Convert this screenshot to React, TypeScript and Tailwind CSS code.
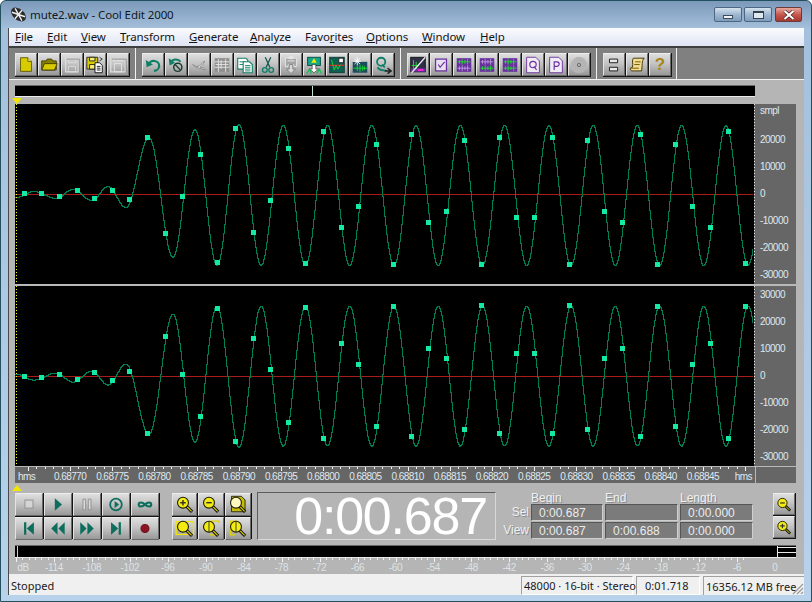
import type { ReactNode } from 'react'

const MENU = [
  { pre: '', key: 'F', post: 'ile', w: 'w-[32px]' },
  { pre: '', key: 'E', post: 'dit', w: 'w-[34px]' },
  { pre: '', key: 'V', post: 'iew', w: 'w-[39px]' },
  { pre: '', key: 'T', post: 'ransform', w: 'w-[69px]' },
  { pre: '', key: 'G', post: 'enerate', w: 'w-[61px]' },
  { pre: '', key: 'A', post: 'nalyze', w: 'w-[55px]' },
  { pre: 'Favo', key: 'r', post: 'ites', w: 'w-[61px]' },
  { pre: '', key: 'O', post: 'ptions', w: 'w-[56px]' },
  { pre: '', key: 'W', post: 'indow', w: 'w-[58px]' },
  { pre: '', key: 'H', post: 'elp', w: 'w-[40px]' },
]

const BEVEL =
  'flex items-center justify-center border-t border-l border-t-[#eeeeee] border-l-[#e4e4e4] border-r border-b border-r-[#6a6a6a] border-b-[#6a6a6a] bg-[linear-gradient(#dedede,#c4c4c4_45%,#989898)]'

// waveform, built from the extrema read off the top channel
function buildExtrema(): [number, number][] {
  const pts: [number, number][] = [
    [15, 197],
    [33, 191],
    [55, 198],
    [72, 189],
    [91, 200],
    [107, 186],
    [125, 207],
    [148, 137],
    [172, 257],
    [194, 129],
    [216, 265],
    [238, 124],
  ]
  for (let k = 0; k < 12; k++) {
    pts.push([238 + 44.27 * k + 22.135, 265])
    pts.push([238 + 44.27 * (k + 1), 125])
  }
  return pts
}

const EXTREMA = buildExtrema()

function waveAt(x: number) {
  for (let i = 0; i < EXTREMA.length - 1; i++) {
    const [x0, y0] = EXTREMA[i]
    const [x1, y1] = EXTREMA[i + 1]
    if (x >= x0 && x <= x1) {
      const t = (x - x0) / (x1 - x0)
      return y0 + ((y1 - y0) * (1 - Math.cos(Math.PI * t))) / 2
    }
  }
  return 194
}

function Channel({ mirrored }: { mirrored?: boolean }) {
  const center = 90
  const toLocal = (y: number) => (mirrored ? center - (y - 104 - center) + 0.6 : y - 104)
  // one pixel column at a time, so the line steps like the original draw
  let d = ''
  for (let x = 15; x <= 754; x++) {
    const y = Math.round(toLocal(waveAt(x)))
    d += d ? `V${y + 0.5}H${x - 15 + 1}` : `M${x - 15} ${y + 0.5}H${x - 15 + 1}`
  }
  const samples = Array.from({ length: 42 }, (_, i) => 24.3 + i * 17.595)
  return (
    <svg width="739" height="180" className="block bg-black">
      <rect x="0" y="90" width="739" height="1" fill="#a81c1c" />
      <path d={d} fill="none" stroke="#007d52" strokeWidth="1" shapeRendering="crispEdges" />
      {samples.map((x) => (
        <rect
          key={x}
          x={Math.round(x - 15 - 2.5)}
          y={Math.round(toLocal(waveAt(x)) - 2.5)}
          width="5"
          height="5"
          fill="#14eaa6"
        />
      ))}
      <line x1="1.5" y1="0" x2="1.5" y2="180" stroke="#ffff00" strokeDasharray="1 2" />
    </svg>
  )
}

function VerticalRuler({ labels, first }: { labels: string[]; first: ReactNode }) {
  return (
    <div className="relative h-[180px] w-[42px] bg-[#666666] text-[10px] leading-none tracking-[-0.55px] text-[#dfe8f0]">
      {first}
      {labels.map((l) => (
        <div key={l} className="flex h-[27px] items-center pl-[6px]">
          {l}
        </div>
      ))}
      <svg width="5" height="180" className="absolute top-0 left-0">
        <line x1="0.5" y1="0" x2="0.5" y2="180" stroke="#e8e8e8" strokeDasharray="1 2" />
      </svg>
    </div>
  )
}

function TimeRuler() {
  const labels = Array.from({ length: 16 }, (_, i) => `0.68${770 + i * 5}`)
  const ticks = Array.from({ length: 90 }, (_, i) => 70 - 15 - 8.44 * 5 + i * 8.44)
  return (
    <div className="flex h-[17px]">
      <div className="h-full w-[740px] border-t border-t-[#b8b8b8] bg-[#666666]">
        <svg width="739" height="5" className="block">
          {ticks.map((x, i) => (
            <rect key={x} x={Math.round(x)} y="0" width="1" height={i % 5 === 0 ? 4 : 2} fill="#f0f0f0" />
          ))}
        </svg>
        <div className="flex text-[10px] leading-[10px] tracking-[-0.55px] text-[#dfe8f0]">
          <div className="w-[34px] pl-[3px]">hms</div>
          {labels.map((l) => (
            <div key={l} className="w-[42.2px] shrink-0 text-center">
              {l}
            </div>
          ))}
          <div className="flex-1 pr-[3px] text-right">hms</div>
        </div>
      </div>
      <div className="h-full flex-1 border-t border-l border-t-[#b8b8b8] border-l-[#b8b8b8] bg-[#666666]" />
    </div>
  )
}

function Marker({ down }: { down?: boolean }) {
  return (
    <svg width="10" height="6" className="-ml-[3px] block">
      <path d={down ? 'M0 0h10L5 6z' : 'M5 0l5 6H0z'} fill="#f2e600" />
    </svg>
  )
}

function Icon({ children }: { children: ReactNode }) {
  return (
    <svg viewBox="0 0 22 23" width="21" height="22" className="block">
      {children}
    </svg>
  )
}

const TEAL = '#0f7f68'
const PURPLE = '#6b2fa0'

function WaveBars({ y, color }: { y: number; color: string }) {
  return (
    <path
      d={`M4 ${y}h14M6 ${y - 2}v4M9 ${y - 3}v6M12 ${y - 2}v4M15 ${y - 3}v6`}
      stroke={color}
      strokeWidth="1"
      fill="none"
    />
  )
}

function Floppy({ color, edge }: { color: string; edge: string }) {
  return (
    <>
      <path d="M4 4h14v15H4z" fill={color} stroke={edge} strokeWidth="1.5" />
      <path d="M7 4h8v5H7zM7 13h8v6H7z" fill="none" stroke={edge} />
    </>
  )
}

const TOOLBAR: ReactNode[][] = [
  [
    <Icon>
      <path d="M5 3.5h8l4 4v11H5z" fill="#d8cc00" stroke="#5f5800" />
      <path d="M13 3.5v4h4" fill="#f4ee70" stroke="#5f5800" />
    </Icon>,
    <Icon>
      <path d="M3 7h5l1-2h5l1 2h4v10H3z" fill="#8a8000" stroke="#3e3a00" />
      <path d="M6 10h14l-3 7H3z" fill="#d8cc00" stroke="#3e3a00" />
    </Icon>,
    <Icon>
      <Floppy color="none" edge="#dcdcdc" />
      <path d="M5 5h14v15" fill="none" stroke="#8c8c8c" />
    </Icon>,
    <Icon>
      <path d="M2 3h12v13H2z" fill="#d8cc00" stroke="#222" />
      <path d="M5 3h6v4H5zM5 11h6v5H5z" fill="#f4ee70" stroke="#222" />
      <path d="M11 9h5l3 3v8h-8z" fill="#fff" stroke="#111" />
      <path d="M13 13h4M13 15h4M13 17h4" stroke="#111" />
      <path d="M16 3l3 2-3 2" fill="none" stroke="#333" />
    </Icon>,
    <Icon>
      <path d="M3 4h16v15H3z" fill="none" stroke="#dcdcdc" strokeWidth="1.5" />
      <path d="M5 7h12M7 4v3M11 4v3M15 4v3M7 10h8v9H7z" fill="none" stroke="#e6e6e6" />
      <path d="M4 5h16v15" fill="none" stroke="#8c8c8c" />
    </Icon>,
  ],
  [
    <Icon>
      <path d="M6 11a6 5.5 0 1 1 6 7" fill="none" stroke={TEAL} strokeWidth="2.4" />
      <path d="M3 6l1 8 7-3z" fill={TEAL} />
    </Icon>,
    <Icon>
      <path d="M5 9a6 5 0 0 1 11-1" fill="none" stroke={TEAL} strokeWidth="2.2" />
      <path d="M3 4l1 8 6-3z" fill={TEAL} />
      <circle cx="13" cy="14" r="4.5" fill="none" stroke="#1c3c34" strokeWidth="1.6" />
      <path d="M10 11l6 6" stroke="#1c3c34" strokeWidth="1.4" />
    </Icon>,
    <Icon>
      <path d="M4 11c4 4 7 3 13-4-1 4-3 6-5 7 3 0 5 1 6 3-5-2-10-2-14-6z" fill="#e8e8e8" stroke="#8a8a8a" />
    </Icon>,
    <Icon>
      <rect x="3" y="4" width="16" height="15" fill="#8e8e8e" />
      <path d="M3 8h16M3 14h16M7 5v14M15 5v14M10 6v10M4 11h14" stroke="#e6e6e6" fill="none" />
    </Icon>,
    <Icon>
      <path d="M3 4h9l2 2v10H3z" fill="#fff" stroke={TEAL} strokeWidth="1.2" />
      <path d="M5 8h6M5 11h6" stroke={TEAL} />
      <path d="M9 8h7l3 3v9H9z" fill="#fff" stroke={TEAL} strokeWidth="1.2" />
      <path d="M11 12h6M11 14h6M11 16h6M11 18h6" stroke={TEAL} />
    </Icon>,
    <Icon>
      <path d="M8 3l5 11M14 3L9 14" stroke="#145a4c" strokeWidth="1.4" fill="none" />
      <circle cx="7.5" cy="17" r="2.6" fill="none" stroke={TEAL} strokeWidth="1.5" />
      <circle cx="14.5" cy="17" r="2.6" fill="none" stroke={TEAL} strokeWidth="1.5" />
    </Icon>,
    <Icon>
      <path d="M5 4h12v9h-3v-2H8v2H5z" fill="#a4a4a4" stroke="#e8e8e8" />
      <path d="M9 2.5h4v2H9zM7 7h8" stroke="#eeeeee" fill="none" />
      <path d="M9 11h4v5h3l-5 5-5-5h3z" fill="#d8d8d8" stroke="#7c7c7c" />
    </Icon>,
    <Icon>
      <rect x="4" y="3" width="14" height="9" fill="#12a888" stroke="#0a4a40" />
      <path d="M11 4l3 5H8z" fill="#f4ea00" />
      <path d="M9 11h4v5h3l-5 4-5-4h3z" fill="#fff" stroke="#111" strokeWidth="0.6" />
      <path d="M3 21l3-5 2 5M14 21l3-5 2 5" stroke="#10c050" fill="none" strokeWidth="1.4" />
    </Icon>,
    <Icon>
      <rect x="3" y="3" width="16" height="17" fill="#0f5e52" stroke="#0b3a34" />
      <rect x="13" y="4" width="5" height="5" fill="#fff" stroke="#222" />
      <path d="M3 12h16" stroke="#e8202c" strokeWidth="1.4" />
      <path d="M5 6l3 11 2-5 2 4 3-5" stroke="#12e030" fill="none" />
    </Icon>,
    <Icon>
      <rect x="3" y="8" width="16" height="12" fill="#1c4c5c" />
      <path d="M8 3v9M4 7.5h8M5 4.5l6 6M11 4.5l-6 6" stroke="#fff" />
      <path d="M4 15h15M8 12v6M11 11v8M14 12v6M16 13v4" stroke="#14e030" />
    </Icon>,
    <Icon>
      <circle cx="9" cy="8" r="4.5" fill="none" stroke={TEAL} strokeWidth="2" />
      <path d="M10 11l3 3" stroke={TEAL} strokeWidth="2" />
      <path d="M5 14c2 4 6 3 10 4" stroke={TEAL} strokeWidth="2" fill="none" />
      <path d="M13 18h6M16 15l4 3-4 3" stroke="#222" strokeWidth="1.6" fill="none" />
    </Icon>,
  ],
  [
    <Icon>
      <rect x="3" y="3" width="16" height="16" fill="#2f2f48" stroke="#111" />
      <path d="M3 15h16v4H3z" fill={PURPLE} />
      <path d="M11 17h6" stroke="#ff20d0" strokeWidth="2" />
      <path d="M4 12h8M6 6v10M9 8v8" stroke="#20e030" />
      <path d="M4 20L19 3" stroke="#ececec" strokeWidth="1.4" />
    </Icon>,
    <Icon>
      <rect x="5" y="5" width="12" height="13" fill="#e6e0f0" stroke={PURPLE} strokeWidth="1.4" />
      <path d="M8 11l2 3 5-6" fill="none" stroke={PURPLE} strokeWidth="1.3" />
    </Icon>,
    <Icon>
      <rect x="3" y="4" width="16" height="15" fill={PURPLE} />
      <WaveBars y={8} color="#20e030" />
      <WaveBars y={15} color="#b8a0d8" />
    </Icon>,
    <Icon>
      <rect x="3" y="4" width="16" height="15" fill={PURPLE} />
      <WaveBars y={8} color="#b8a0d8" />
      <WaveBars y={15} color="#20e030" />
    </Icon>,
    <Icon>
      <rect x="3" y="4" width="16" height="15" fill={PURPLE} />
      <WaveBars y={8} color="#20e030" />
      <WaveBars y={15} color="#20e030" />
    </Icon>,
    <Icon>
      <path d="M4 3h10l4 4v13H4z" fill="#f0ecf6" stroke={PURPLE} />
      <circle cx="11" cy="11" r="3.5" fill="none" stroke={PURPLE} strokeWidth="1.3" />
      <path d="M12 13l3 4" stroke={PURPLE} strokeWidth="1.3" />
    </Icon>,
    <Icon>
      <path d="M4 3h10l4 4v13H4z" fill="#f0ecf6" stroke={PURPLE} />
      <path d="M9 17V8h3a2.5 2.5 0 0 1 0 5H9" fill="none" stroke={PURPLE} strokeWidth="1.3" />
    </Icon>,
    <Icon>
      <circle cx="11" cy="11.5" r="8.5" fill="#b4b4b4" stroke="#e4e4e4" />
      <circle cx="11" cy="11.5" r="8.5" fill="none" stroke="#7c7c7c" strokeWidth="0.5" />
      <circle cx="11" cy="11.5" r="1.8" fill="none" stroke="#666" />
    </Icon>,
  ],
  [
    <Icon>
      <path d="M6 5h9v4H6zM6 14h9v4H6z" fill="#e8e8e8" stroke="#111" />
    </Icon>,
    <Icon>
      <path d="M7 4h12c-3 2-2 9-3 14H5c-3-3 0-4 1-4 1-4-1-8 1-10z" fill="#f2dc90" stroke="#3a2c00" />
      <path d="M9 8h6M8 11h6M4 15h9" stroke="#6a5200" />
    </Icon>,
    <div className="font-['Liberation_Sans',sans-serif] text-[17px] font-bold text-[#a88414]">?</div>,
  ],
]

function Lens({ kind }: { kind: 'plus' | 'minus' | 'page' | 'box' | 'right' | 'left' }) {
  return (
    <svg viewBox="0 0 26 22" width="25" height="21" className="block">
      {kind === 'page' && <path d="M6 2h11l4 4v13H6z" fill="#c8bc00" stroke="#222" />}
      {kind === 'box' && <rect x="3.5" y="3.5" width="19" height="14" fill="none" stroke="#f0e400" strokeWidth="1.4" />}
      {kind === 'right' && <path d="M12 3h10v2M12 18h9" fill="none" stroke="#e0d400" strokeWidth="1.4" />}
      {kind === 'left' && <path d="M13 3H5v15h5" fill="none" stroke="#e0d400" strokeWidth="1.4" />}
      <path d="M15 13l6 6" stroke="#111" strokeWidth="3.5" />
      <path d="M15.5 13.5l5 5" stroke="#d8cc00" strokeWidth="1.3" />
      <circle cx="11" cy="9" r="6" fill={kind === 'page' ? '#fff8c0' : '#f4ec10'} stroke="#1c1c00" strokeWidth="1.2" />
      {kind === 'plus' && <path d="M8 9h6M11 6v6" stroke="#333" strokeWidth="1.6" />}
      {kind === 'minus' && <path d="M8 9h6" stroke="#333" strokeWidth="1.6" />}
      {(kind === 'right' || kind === 'left') && <path d="M11 3v12" stroke="#333" strokeWidth="1" />}
    </svg>
  )
}

const DEEP = '#0d6e5e'

function Glyph({ children }: { children: ReactNode }) {
  return (
    <svg viewBox="0 0 29 22" width="28" height="21" className="block">
      {children}
    </svg>
  )
}

const TRANSPORT: ReactNode[] = [
  <Glyph>
    <rect x="10" y="6" width="9" height="9" fill="#d4d4d4" stroke="#8e8e8e" />
  </Glyph>,
  <Glyph>
    <path d="M11 4l8 7-8 7z" fill={DEEP} />
  </Glyph>,
  <Glyph>
    <path d="M10 5h3v12h-3zM16 5h3v12h-3z" fill="#d8d8d8" stroke="#8e8e8e" />
  </Glyph>,
  <Glyph>
    <circle cx="14.5" cy="11" r="6.5" fill="none" stroke={DEEP} strokeWidth="2" />
    <path d="M13 7l5 4-5 4z" fill={DEEP} />
  </Glyph>,
  <Glyph>
    <path d="M14.5 11c-3-3-7-3-7 0s4 3 7 0c3-3 7-3 7 0s-4 3-7 0z" fill="none" stroke={DEEP} strokeWidth="2.4" />
  </Glyph>,
  <Glyph>
    <path d="M9 4h2.5v14H9zM20 4v14l-8-7z" fill={DEEP} />
  </Glyph>,
  <Glyph>
    <path d="M14 4v14l-7-7zM22 4v14l-7-7z" fill={DEEP} />
  </Glyph>,
  <Glyph>
    <path d="M7 4v14l7-7zM15 4v14l7-7z" fill={DEEP} />
  </Glyph>,
  <Glyph>
    <path d="M9 4v14l8-7zM17.5 4H20v14h-2.5z" fill={DEEP} />
  </Glyph>,
  <Glyph>
    <circle cx="14.5" cy="11" r="4.5" fill="#8c1420" stroke="#5c0c14" />
  </Glyph>,
]

const ZOOMS: ('plus' | 'minus' | 'page' | 'box' | 'right' | 'left')[] = ['plus', 'minus', 'page', 'box', 'right', 'left']

const DB = ['-114', '-108', '-102', '-96', '-90', '-84', '-78', '-72', '-66', '-60', '-54', '-48', '-42', '-36', '-30', '-24', '-18', '-12', '-6', '0']

function TimeBox({ value, width }: { value: string; width: string }) {
  return (
    <div className={`${width} flex h-[17px] items-center border border-t-[#555555] border-l-[#555555] border-r-[#cfcfcf] border-b-[#cfcfcf] bg-[#7b7b7b] pl-[7px] text-[12px] leading-none text-[#ececec] [text-shadow:none]`}>
      {value}
    </div>
  )
}

export default function App() {
  return (
    <div className="flex h-[602px] w-[812px] flex-col overflow-hidden rounded-t-[6px] border border-[#23505e] bg-[linear-gradient(#7c99ba,#a5c0dc_28px,#b8d2ec)] font-['Liberation_Sans',sans-serif]">
      {/* title bar */}
      <div className="flex h-[27px] shrink-0 items-center pl-[9px] pr-[9px]">
        <svg width="17" height="17" viewBox="0 0 17 17" className="shrink-0">
          <g transform="rotate(40 8.5 8.5)">
            <ellipse cx="8.5" cy="8.5" rx="8.5" ry="5.5" fill="#2c2c2c" />
            <path d="M2 6l13 5M2 11l13-5M8.5 3v11" stroke="#eeeeee" strokeWidth="1.4" />
          </g>
        </svg>
        <div className="ml-[3px] flex-1 font-['Noto_Sans',sans-serif] text-[11.5px] leading-none tracking-[-0.1px] text-[#101820]">
          mute2.wav - Cool Edit 2000
        </div>
        <div className="mt-[6px] flex items-start self-start">
          <div className="flex h-[15px] w-[28px] items-center justify-center rounded-[2px] border border-[#4d6782] bg-[linear-gradient(#d6e2ee,#9fb8d0_50%,#7f9dbb)]">
            <div className="mt-[5px] h-[4px] w-[10px] border border-[#3c4c5c] bg-[#f0f4f8]" />
          </div>
          <div className="ml-[2px] flex h-[15px] w-[28px] items-center justify-center rounded-[2px] border border-[#4d6782] bg-[linear-gradient(#d6e2ee,#9fb8d0_50%,#7f9dbb)]">
            <div className="h-[8px] w-[11px] border border-t-2 border-[#33414f] bg-[#dfe8f0]" />
          </div>
          <div className="ml-[3px] flex h-[15px] w-[27px] items-center justify-center rounded-[2px] border border-[#6b3a3a] bg-[linear-gradient(#e8a8a0,#c8584c_50%,#a83830)]">
            <svg width="12" height="10" viewBox="0 0 12 10">
              <path d="M1.5 1l9 8M10.5 1l-9 8" stroke="#3c1c1c" strokeWidth="3.4" />
              <path d="M1.5 1l9 8M10.5 1l-9 8" stroke="#ffffff" strokeWidth="2.2" />
            </svg>
          </div>
        </div>
      </div>

      {/* client area */}
      <div className="mx-[7px] mb-[7px] flex flex-1 flex-col border-l border-[#4a4a4a]">
        {/* menu */}
        <div className="flex h-[18px] shrink-0 items-center bg-[linear-gradient(#fbfcfe,#dfe4f4)] pl-[6px] font-['Noto_Sans',sans-serif] text-[11.5px] leading-none tracking-[-0.1px] text-[#141414]">
          {MENU.map((m) => (
            <div key={m.post} className={m.w}>
              {m.pre}
              <u>{m.key}</u>
              {m.post}
            </div>
          ))}
        </div>

        {/* toolbar */}
        <div className="flex h-[34px] shrink-0 border-t-2 border-b border-t-[#3e3e3e] border-b-[#f2f2f2] bg-[#808080]">
          {TOOLBAR.map((group, i) => (
            <div
              key={i}
              className={`${['w-[127px] pl-[6px]', 'w-[265px] pl-[6px]', 'w-[196px] pl-[6px]', 'w-[80px] pl-[6px]'][i]} border-r border-r-[#f2f2f2] pt-[5px]`}
            >
              <div className="flex h-[24px] w-fit gap-px bg-[#141414] pr-px pb-px">
                {group.map((icon, j) => (
                  <div key={j} className={`${BEVEL} h-[23px] w-[22px]`}>
                    {icon}
                  </div>
                ))}
              </div>
            </div>
          ))}
        </div>

        {/* body */}
        <div className="flex flex-1 flex-col bg-[#b5b5b5] pl-[6px] pr-[8px]">
          <div className="mt-[5px] h-[12px] w-[740px] border-t border-b border-t-[#6a6a6a] border-b-[#ececec] bg-black">
            <div className="ml-[297px] h-full w-px bg-[#bfe0d8]" />
          </div>
          <div className="flex h-[7px] items-start pt-px">
            <Marker down />
          </div>

          <div className="flex">
            <Channel />
            <div className="w-px bg-black" />
            <VerticalRuler
              first={<div className="mb-[8px] flex h-[14px] items-center pl-[6px]">smpl</div>}
              labels={['20000', '10000', '0', '-10000', '-20000', '-30000']}
            />
          </div>
          <div className="h-[2px] bg-[#b8b8b8]" />
          <div className="flex">
            <Channel mirrored />
            <div className="w-px bg-black" />
            <VerticalRuler
              first={<div className="mb-[4px] flex h-[18px] items-center pl-[6px]">30000</div>}
              labels={['20000', '10000', '0', '-10000', '-20000', '-30000']}
            />
          </div>
          <TimeRuler />

          <div className="flex h-[9px] items-start pt-[2px]">
            <Marker />
          </div>

          {/* controls */}
          <div className="flex h-[48px]">
            <div className="mt-px grid h-[46px] w-[145px] grid-cols-5 gap-px bg-[#141414] pr-px pb-px">
              {TRANSPORT.map((g, i) => (
                <div key={i} className={BEVEL}>
                  {g}
                </div>
              ))}
            </div>
            <div className="mt-px ml-[12px] grid h-[46px] w-[80px] grid-cols-3 gap-px bg-[#141414] pr-px pb-px">
              {ZOOMS.map((z) => (
                <div key={z} className={BEVEL}>
                  <Lens kind={z} />
                </div>
              ))}
            </div>
            <div className="ml-[5px] flex h-[48px] w-[240px] items-center justify-end border border-t-[#5c5c5c] border-l-[#5c5c5c] border-r-[#d8d8d8] border-b-[#d8d8d8] pr-[8px] text-[52px] leading-[46px] tracking-[-1.2px] text-white">
              0:00.687
            </div>
            <div className="w-[257px] text-[12px] leading-none text-[#f0f0f0] [text-shadow:1px_1px_0_#8a8a8a]">
              <div className="flex h-[12px] items-center pl-[35px]">
                <div className="w-[74px]">Begin</div>
                <div className="w-[75px]">End</div>
                <div>Length</div>
              </div>
              <div className="flex h-[18px] gap-[2px]">
                <div className="w-[33px] text-right leading-[17px]">Sel</div>
                <TimeBox value="0:00.687" width="w-[72px]" />
                <TimeBox value="" width="w-[73px]" />
                <TimeBox value="0:00.000" width="w-[73px]" />
              </div>
              <div className="flex h-[18px] gap-[2px]">
                <div className="w-[33px] text-right leading-[17px]">View</div>
                <TimeBox value="0:00.687" width="w-[72px]" />
                <TimeBox value="0:00.688" width="w-[73px]" />
                <TimeBox value="0:00.000" width="w-[73px]" />
              </div>
            </div>
            <div className="mt-px ml-[20px] flex h-[46px] w-[23px] flex-col gap-px bg-[#141414] pr-px pb-px">
              {(['minus', 'plus'] as const).map((z) => (
                <div key={z} className={`${BEVEL} flex-1 overflow-hidden`}>
                  <Lens kind={z} />
                </div>
              ))}
            </div>
          </div>

          {/* level meter */}
          <div className="mt-[5px] h-[13px] border-t border-b border-t-[#666666] border-b-[#e8e8e8] bg-black">
            <svg width="781" height="11" className="block">
              <rect x="2" y="0" width="1" height="11" fill="#f2e600" />
              <path d="M762.5 0v11M763 1.5h18M763 6.5h18" stroke="#e8e8e8" fill="none" />
            </svg>
          </div>
          <svg width="781" height="4" className="block shrink-0">
            {Array.from({ length: 116 }, (_, i) => 39 - 37.95 + (i * 37.95) / 6).map((x, i) => (
              <rect key={x} x={Math.round(x)} y="0" width="1" height={i % 6 === 0 ? 4 : 2} fill="#f2f2f2" />
            ))}
          </svg>
          <div className="flex h-[12px] items-center text-[10px] leading-none tracking-[-0.3px] text-[#dde3e8]">
            <div className="w-[16px] text-center">dB</div>
            <div className="w-[4px]" />
            {DB.map((d) => (
              <div key={d} className="w-[37.95px] shrink-0 text-center">
                {d}
              </div>
            ))}
          </div>
        </div>

        {/* status bar */}
        <div className="flex h-[21px] shrink-0 items-center bg-[#f0f0f0] pt-[2px] font-['Noto_Sans',sans-serif] text-[11px] leading-none text-[#1a1a1a]">
          <div className="flex-1 pl-[2px]">Stopped</div>
          <div className="flex h-[19px] w-[112px] items-center border border-t-[#a0a0a0] border-l-[#a0a0a0] border-r-white border-b-white pl-[2px] whitespace-nowrap">
            48000 · 16-bit · Stereo
          </div>
          <div className="ml-[3px] flex h-[19px] w-[64px] items-center border border-t-[#a0a0a0] border-l-[#a0a0a0] border-r-white border-b-white pl-[8px]">
            0:01.718
          </div>
          <div className="relative ml-[3px] flex h-[19px] w-[101px] items-center overflow-hidden border-t border-l border-t-[#a0a0a0] border-l-[#a0a0a0] pl-[2px] whitespace-nowrap">
            16356.12 MB free
            <svg width="14" height="14" className="absolute right-0 bottom-0">
              <path d="M13 3L3 13M13 7l-6 6M13 11l-2 2" stroke="#9a9a9a" strokeWidth="1.2" />
            </svg>
          </div>
        </div>
      </div>
    </div>
  )
}
